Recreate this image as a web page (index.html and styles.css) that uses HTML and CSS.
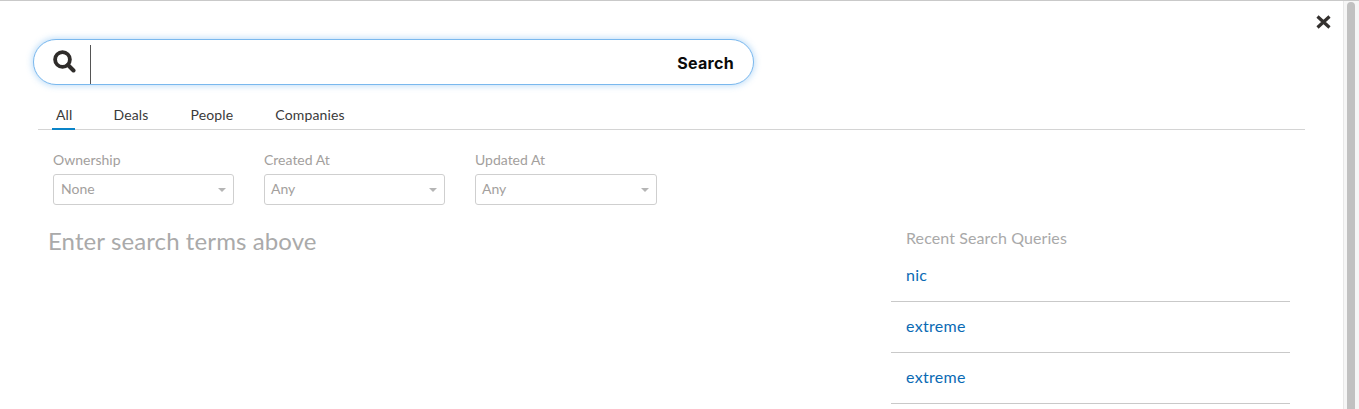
FILE: index.html
```html
<!DOCTYPE html>
<html lang="en">
<head>
<meta charset="utf-8">
<title>Search</title>
<link rel="stylesheet" href="styles.css">
</head>
<body>
<div class="page">
  <main class="panel">
    <button class="close" aria-label="Close">
      <svg width="16" height="16" viewBox="0 0 16 16"><path d="M1.5 2.5 13.5 13.5M13.5 2.5 1.5 13.5" stroke="#33302e" stroke-width="3.2" fill="none"/></svg>
    </button>
    <div class="searchbar">
      <span class="search-icon">
        <svg width="24" height="24" viewBox="0 0 24 24"><circle cx="10.5" cy="10.5" r="7.4" stroke="#2f2c2a" stroke-width="3.8" fill="none"/><path d="M16 16 21.5 21.5" stroke="#2f2c2a" stroke-width="4" stroke-linecap="round" fill="none"/></svg>
      </span>
      <span class="caret"></span>
      <span class="search-btn">Search</span>
    </div>
    <nav class="tabs">
      <a class="tab active">All</a>
      <a class="tab">Deals</a>
      <a class="tab">People</a>
      <a class="tab">Companies</a>
    </nav>
    <div class="filters">
      <div class="filter first">
        <label>Ownership</label>
        <div class="select"><span>None</span><i class="arrow"></i></div>
      </div>
      <div class="filter">
        <label>Created At</label>
        <div class="select"><span>Any</span><i class="arrow"></i></div>
      </div>
      <div class="filter wide">
        <label>Updated At</label>
        <div class="select"><span>Any</span><i class="arrow"></i></div>
      </div>
    </div>
    <div class="content">
      <h2 class="empty">Enter search terms above</h2>
      <aside class="recent">
        <h3>Recent Search Queries</h3>
        <a class="query">nic</a>
        <a class="query">extreme</a>
        <a class="query">extreme</a>
      </aside>
    </div>
  </main>
  <div class="scrollbar"><div class="thumb"></div></div>
</div>
</body>
</html>
```
FILE: styles.css
```css
* { box-sizing: border-box; }
html, body { margin: 0; height: 100%; overflow: hidden; }
body { background: #fff; font-family: "Lato", "Open Sans", sans-serif; color: #333; }
.page { display: flex; height: 409px; border-top: 1px solid #c9c9c9; }
.panel { flex: 1; min-width: 0; position: relative; padding: 38px 38px 0 33px; }
.close { position: absolute; top: 13px; right: 11px; width: 16px; height: 16px; padding: 0; border: 0; background: none; display: block; }
.close svg { display: block; }

.searchbar { width: 721px; height: 46px; display: flex; align-items: center; border: 1px solid #7ab8ee; border-radius: 23px; box-shadow: 0 0 6px 1px rgba(110, 180, 240, .45); background: #fff; }
.search-icon { width: 56px; padding-left: 18px; display: flex; margin-top: -2px; }
.caret { width: 1px; height: 39px; background: #555; margin-top: 5px; }
.search-btn { margin-left: auto; padding: 2px 19px 0 0; font-family: "Inter", sans-serif; font-weight: 700; font-size: 16px; letter-spacing: .3px; color: #0b0b0b; }

.tabs { margin: 19px 0 0 5px; display: flex; gap: 42px; border-bottom: 1px solid #d4d4d4; height: 26px; padding-left: 17px; }
.tab { font-size: 14px; line-height: 21px; height: 26px; color: #3a3a3a; letter-spacing: .15px; }
.tab.active { border-bottom: 2px solid #0a84c8; margin-left: -3px; padding: 0 2px 0 4px; margin-right: -3px; }

.filters { display: flex; gap: 30px; margin: 21px 0 0 20px; }
.filter { width: 181px; }
.filter.wide { width: 182px; }
.filter label { display: block; font-size: 14px; line-height: 18px; color: #a3a09d; }
.select { margin-top: 5px; height: 31px; border: 1px solid #cfcfcf; border-radius: 3px; display: flex; align-items: center; justify-content: space-between; padding: 0 7px 3px 6px; font-size: 14px; color: #a3a09d; }
.filter.first .select { padding-left: 7px; }
.arrow { width: 0; height: 0; border-left: 4.5px solid transparent; border-right: 4.5px solid transparent; border-top: 4.5px solid #b5b5b5; margin: 3px 0 0; }

.content { display: flex; justify-content: space-between; margin-top: 20px; padding-left: 15px; padding-right: 15px; }
.empty { margin: 0; font-size: 24px; line-height: 32px; font-weight: 400; color: #aaa; letter-spacing: .1px; }
.recent { width: 399px; }
.recent h3 { margin: 3px 0 0; padding-left: 15px; font-size: 16px; line-height: 20px; font-weight: 400; color: #a9a9a9; letter-spacing: .1px; }
.query { display: block; height: 51px; padding: 13px 0 0 15px; line-height: 22px; font-size: 16px; letter-spacing: .3px; color: #0a6ab4; border-bottom: 1px solid #c9c9c9; }
.recent h3 + .query { height: 54px; padding-top: 16px; }

.scrollbar { width: 16px; background: #f6f6f6; border-left: 1px solid #e8e8e8; padding: 1px 2px 0 3px; }
.thumb { height: 100%; width: 8px; background: #c1c1c1; border-radius: 4px 4px 0 0; }
```
